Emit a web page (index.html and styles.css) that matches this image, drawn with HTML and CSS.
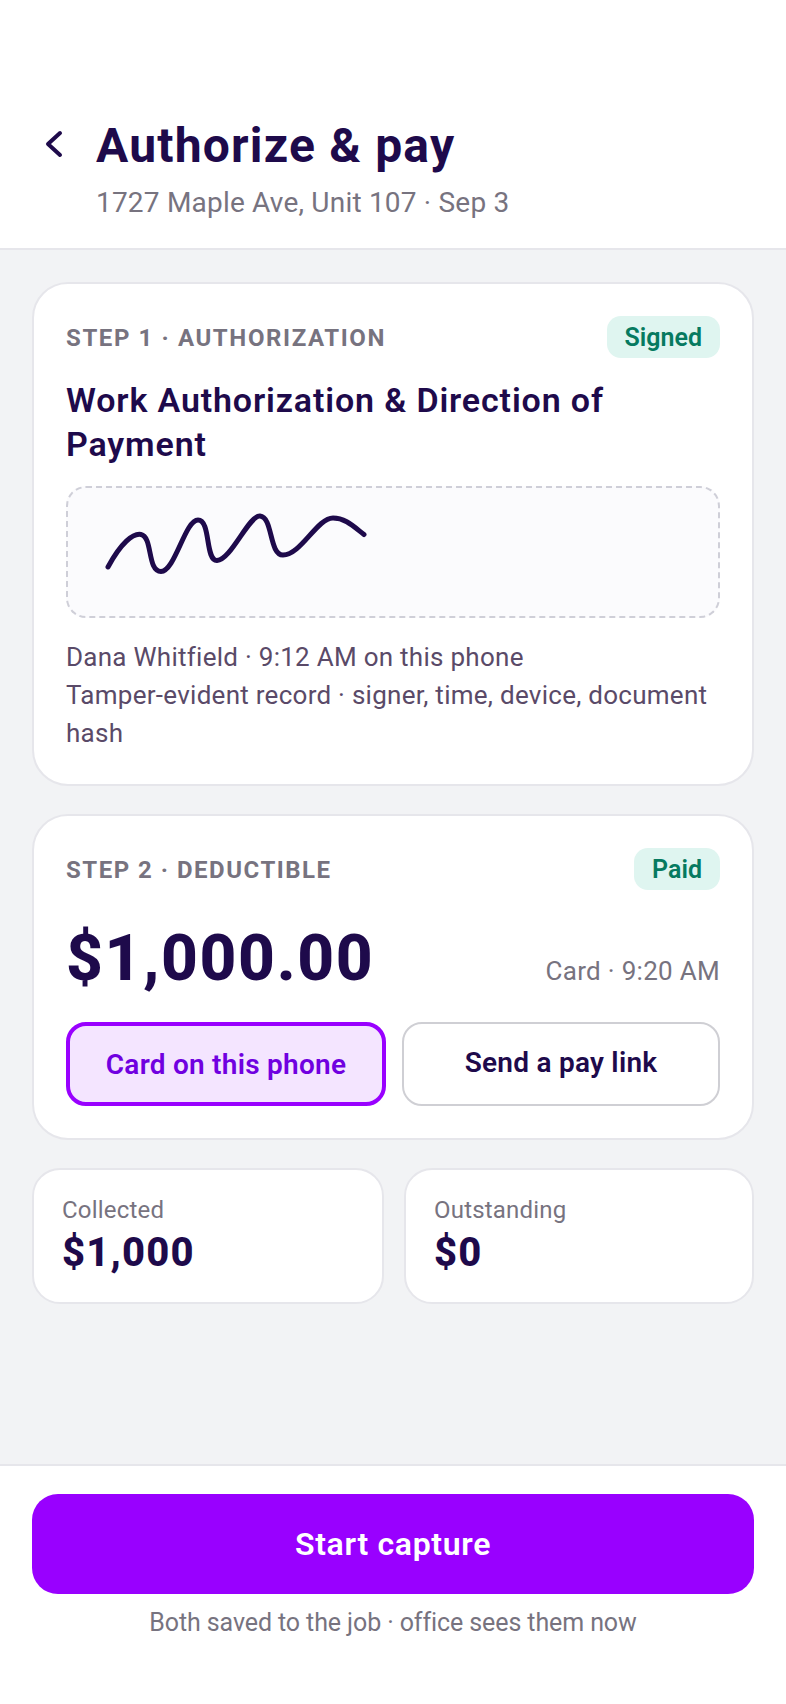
FILE: index.html
```html
<!DOCTYPE html>
<html lang="en">
<head>
<meta charset="utf-8">
<title>Authorize &amp; pay</title>
<link rel="stylesheet" href="styles.css">
</head>
<body>
<div class="screen">
  <header class="top">
    <button class="back" aria-label="Back">
      <svg class="back-icon" viewBox="0 0 20 30" width="20" height="30"><path d="M17 4 L5 15 L17 26" fill="none" stroke="#1e0a4b" stroke-width="4" stroke-linecap="round" stroke-linejoin="round"/></svg>
    </button>
    <div class="titles">
      <h1 class="title">Authorize &amp; pay</h1>
      <p class="subtitle">1727 Maple Ave, Unit 107 · Sep 3</p>
    </div>
  </header>
  <main class="content">
    <section class="card">
      <div class="card-head">
        <span class="eyebrow">STEP 1 · AUTHORIZATION</span>
        <span class="badge">Signed</span>
      </div>
      <h2 class="doc-title">Work Authorization &amp; Direction of Payment</h2>
      <div class="sig-box">
        <svg class="sig" viewBox="0 0 300 80" width="300" height="80"><path d="M5 56 C 18 32, 30 22, 38 23.5 C 50 26, 44 60.5, 58 60.5 C 72 60.5, 82 9, 95 9 C 108 9, 102 50, 114 49.5 C 128 49, 146 4, 157 5 C 170 6, 166 44, 180 44 C 198 44, 214 7, 230 7 C 242 7, 250 15, 261 23.5" fill="none" stroke="#1e0a4b" stroke-width="5" stroke-linecap="round" stroke-linejoin="round"/></svg>
      </div>
      <p class="sig-meta">Dana Whitfield · 9:12 AM on this phone<br>Tamper-evident record · signer, time, device, document hash</p>
    </section>
    <section class="card">
      <div class="card-head">
        <span class="eyebrow eyebrow-tight">STEP 2 · DEDUCTIBLE</span>
        <span class="badge">Paid</span>
      </div>
      <div class="amount-row">
        <span class="amount">$1,000.00</span>
        <span class="amount-note">Card · 9:20 AM</span>
      </div>
      <div class="methods">
        <button class="method method-on">Card on this phone</button>
        <button class="method">Send a pay link</button>
      </div>
    </section>
    <div class="stats">
      <div class="stat">
        <div class="stat-label">Collected</div>
        <div class="stat-value">$1,000</div>
      </div>
      <div class="stat">
        <div class="stat-label">Outstanding</div>
        <div class="stat-value">$0</div>
      </div>
    </div>
  </main>
  <footer class="bottom">
    <button class="cta">Start capture</button>
    <p class="note">Both saved to the job · office sees them now</p>
  </footer>
</div>
</body>
</html>
```

FILE: styles.css
```css
* { box-sizing: border-box; }
html, body { margin: 0; padding: 0; }
body { font-family: "Roboto", "Liberation Sans", sans-serif; color: #1e0a4b; background: #fff; }
button { font-family: inherit; cursor: pointer; }

.screen { width: 786px; height: 1704px; display: flex; flex-direction: column; overflow: hidden; }

.top { height: 250px; padding: 116px 32px 0 43px; display: flex; align-items: flex-start; gap: 23px; background: #fff; border-bottom: 2px solid #e6e6eb; }
.back { width: 30px; height: 30px; margin-top: 13px; padding: 0; border: 0; background: none; display: flex; }
.back-icon { display: block; }
.titles { min-width: 0; }
.title { margin: 0; font-size: 48px; line-height: 60px; font-weight: 700; letter-spacing: 1.2px; }
.subtitle { margin: 9px 0 0; font-size: 28px; line-height: 36px; color: #77737f; letter-spacing: 0.2px; }

.content { flex: 1; background: #f2f3f5; padding: 32px 32px 0; display: flex; flex-direction: column; gap: 28px; }

.card { background: #fff; border: 2px solid #e6e6eb; border-radius: 36px; padding: 32px; }
.card-head { display: flex; justify-content: space-between; align-items: center; }
.eyebrow { font-size: 24px; font-weight: 700; letter-spacing: 1.6px; color: #77737f; padding-top: 2px; }
.eyebrow-tight { letter-spacing: 1.5px; }
.badge { height: 42px; padding: 0 18px; border-radius: 14px; background: #dff5f0; color: #067a60; font-size: 25px; font-weight: 600; display: flex; align-items: center; }

.doc-title { margin: 20px 0 0; font-size: 34px; line-height: 44px; font-weight: 600; letter-spacing: 0.86px; }
.sig-box { height: 132px; margin-top: 20px; background: #fbfbfd; border: 2px dashed #cfcfd8; border-radius: 20px; padding: 23px 0 0 35px; }
.sig { display: block; }
.sig-meta { margin: 20px 0 0; font-size: 26px; line-height: 38px; color: #5a4a68; letter-spacing: 0.27px; }

.amount-row { display: flex; justify-content: space-between; align-items: flex-end; margin-top: 27px; }
.amount { font-size: 64px; line-height: 84px; font-weight: 800; letter-spacing: 1.6px; }
.amount-note { font-size: 26px; line-height: 36px; color: #77737f; padding-bottom: 12px; letter-spacing: 0.3px; }

.methods { display: grid; grid-template-columns: 320px 1fr; gap: 16px; margin-top: 21px; }
.method { height: 84px; border-radius: 20px; border: 2px solid #cfcfd4; background: #fff; color: #1e0a4b; font-size: 28px; font-weight: 600; padding: 0 0 4px; letter-spacing: 0.25px; }
.method-on { border: 4px solid #9900ff; background: #f4e5ff; color: #7000e0; padding: 0; }

.stats { display: grid; grid-template-columns: 352px 1fr; gap: 20px; }
.stat { height: 136px; background: #fff; border: 2px solid #e6e6eb; border-radius: 28px; padding: 25px 28px; }
.stat-label { font-size: 24px; line-height: 30px; color: #77737f; letter-spacing: 0.2px; }
.stat-value { font-size: 40px; line-height: 48px; font-weight: 800; margin-top: 4px; letter-spacing: 1.2px; }

.bottom { height: 240px; background: #fff; border-top: 2px solid #e6e6eb; padding: 28px 32px 0; }
.cta { display: block; width: 100%; height: 100px; border: 0; border-radius: 26px; background: #9900ff; color: #fff; font-size: 32px; font-weight: 600; letter-spacing: 0.67px; }
.note { margin: 11px 0 0; text-align: center; font-size: 25px; line-height: 36px; color: #77737f; letter-spacing: -0.1px; }
```
